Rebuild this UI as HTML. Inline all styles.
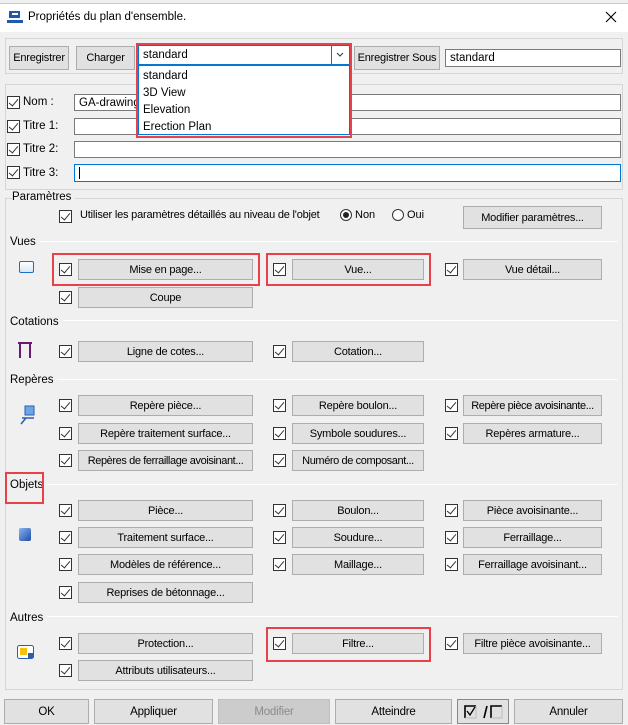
<!DOCTYPE html>
<html><head><meta charset="utf-8"><style>
*{box-sizing:border-box;margin:0;padding:0}
body{width:628px;height:725px;background:#f0f0f0;font-family:"Liberation Sans",sans-serif;font-size:11px;color:#000;position:relative;overflow:hidden}
.a{position:absolute}
.btn{position:absolute;background:#e1e1e1;border:1px solid #adadad;text-align:center;font-size:11px;display:flex;align-items:center;justify-content:center;white-space:nowrap;overflow:hidden;letter-spacing:-0.2px}
.cb{position:absolute;width:13px;height:13px;border:1px solid #333;background:#fff}
.cb:after{content:"";position:absolute;left:3px;top:0px;width:4px;height:8px;border:solid #333;border-width:0 1.5px 1.5px 0;transform:rotate(40deg)}
.tb{position:absolute;background:#fff;border:1px solid #7a7a7a;padding-left:4px;display:flex;align-items:center;font-size:11.5px}
.red{position:absolute;border:2px solid #e8414a}
.lbl{position:absolute;font-size:11.5px;background:#f0f0f0;padding-right:4px}
.ln{position:absolute;height:1px;background:#d5d5d5;border-bottom:1px solid #fff}
.grp{position:absolute;border:1px solid #d5d5d5}
</style></head><body>
<div class="a" style="left:0;top:0;width:628px;height:4px;background:#f0f0f0;border-bottom:1px solid #ccc"></div>
<div class="a" style="left:0;top:4px;width:628px;height:28px;background:#fff"></div>
<svg class="a" style="left:7px;top:11px" width="16" height="13"><rect x="2" y="0" width="11" height="7" fill="#1e5aa8"/><rect x="5" y="2" width="6" height="2" fill="#fff"/><rect x="0" y="9" width="16" height="3" fill="#1e5aa8"/></svg>
<div class="a" style="left:28px;top:11px;font-size:11.5px">Propriétés du plan d'ensemble.</div>
<svg class="a" style="left:605px;top:11px" width="12" height="12"><path d="M1 1L11 11M11 1L1 11" stroke="#000" stroke-width="1.1"/></svg>

<div class="grp" style="left:5px;top:38px;width:618px;height:36px"></div>
<div class="btn" style="left:9px;top:46px;width:60px;height:24px">Enregistrer</div>
<div class="btn" style="left:76px;top:46px;width:59px;height:24px">Charger</div>
<div class="btn" style="left:354px;top:46px;width:86px;height:24px">Enregistrer Sous</div>
<div class="tb" style="left:445px;top:49px;width:176px;height:18px">standard</div>

<div class="grp" style="left:5px;top:84px;width:618px;height:106px"></div>
<div class="cb" style="left:7px;top:96px"></div><div class="a" style="left:23px;top:96px;font-size:11.5px">Nom :</div>
<div class="tb" style="left:74px;top:94px;width:547px;height:17px">GA-drawing</div>
<div class="cb" style="left:7px;top:120px"></div><div class="a" style="left:23px;top:120px;font-size:11.5px">Titre 1:</div>
<div class="tb" style="left:74px;top:118px;width:547px;height:17px"></div>
<div class="cb" style="left:7px;top:143px"></div><div class="a" style="left:23px;top:143px;font-size:11.5px">Titre 2:</div>
<div class="tb" style="left:74px;top:141px;width:547px;height:17px"></div>
<div class="cb" style="left:7px;top:166px"></div><div class="a" style="left:23px;top:167px;font-size:11.5px">Titre 3:</div>
<div class="tb" style="left:74px;top:164px;width:547px;height:18px;border-color:#0078d7"><span style="display:inline-block;width:1px;height:12px;background:#000"></span></div>

<!-- combo -->
<div class="tb" style="left:138px;top:45px;width:212px;height:20px;border-color:#0078d7">standard</div>
<svg class="a" style="left:331px;top:46px" width="18" height="18"><line x1="0.5" y1="0" x2="0.5" y2="18" stroke="#0078d7"/><path d="M6 7L9 10L12 7" stroke="#333" fill="none"/></svg>
<div class="a" style="left:138px;top:65px;width:212px;height:70px;background:#fff;border:1px solid #0078d7;padding:2px 4px;line-height:17px;font-size:11.5px">standard<br>3D View<br>Elevation<br>Erection Plan</div>
<div class="red" style="left:136px;top:43px;width:216px;height:95px"></div>

<!-- big group -->
<div class="grp" style="left:5px;top:198px;width:618px;height:492px"></div>
<div class="lbl" style="left:12px;top:191px">Paramètres</div>
<div class="cb" style="left:59px;top:210px"></div>
<div class="a" style="left:80px;top:209px;letter-spacing:-0.2px">Utiliser les paramètres détaillés au niveau de l'objet</div>
<div class="a" style="left:340px;top:209px;width:12px;height:12px;border:1px solid #333;border-radius:50%;background:#fff"><div class="a" style="left:2px;top:2px;width:6px;height:6px;border-radius:50%;background:#222"></div></div>
<div class="a" style="left:355px;top:209px">Non</div>
<div class="a" style="left:392px;top:209px;width:12px;height:12px;border:1px solid #333;border-radius:50%;background:#fff"></div>
<div class="a" style="left:407px;top:209px">Oui</div>
<div class="btn" style="left:463px;top:206px;width:139px;height:23px">Modifier paramètres...</div>

<div class="ln" style="left:35px;top:241px;width:583px"></div><div class="lbl" style="left:10px;top:236px">Vues</div>
<div class="a" style="left:19px;top:261px;width:15px;height:12px;border:1.5px solid #1e6ec8;border-radius:2px;background:linear-gradient(#fff,#d8e6f5)"></div>
<div class="ln" style="left:55px;top:320px;width:563px"></div><div class="lbl" style="left:10px;top:316px">Cotations</div>
<svg class="a" style="left:17px;top:341px" width="16" height="17"><path d="M1 2H15M3 2V17M13 2V17" stroke="#6b1a6e" stroke-width="2" fill="none"/></svg>
<div class="ln" style="left:47px;top:379px;width:571px"></div><div class="lbl" style="left:10px;top:374px">Repères</div>
<svg class="a" style="left:20px;top:405px" width="18" height="20"><rect x="5" y="1" width="9" height="9" fill="#6fa5e8" stroke="#2a5db0"/><path d="M2 13H14M6 13L1 19" stroke="#2a5db0" stroke-width="1.5" fill="none"/></svg>
<div class="ln" style="left:42px;top:484px;width:576px"></div><div class="lbl" style="left:10px;top:479px">Objets</div>
<div class="red" style="left:5px;top:472px;width:39px;height:32px"></div>
<div class="a" style="left:19px;top:528px;width:12px;height:13px;border-radius:2px;background:linear-gradient(135deg,#8ab4f0,#1d4fa8)"></div>
<div class="ln" style="left:41px;top:616px;width:577px"></div><div class="lbl" style="left:10px;top:612px">Autres</div>
<svg class="a" style="left:17px;top:645px" width="17" height="14"><rect x="0.5" y="0.5" width="16" height="13" rx="2" fill="#fff" stroke="#2a5db0"/><rect x="3" y="3" width="7" height="7" fill="#f4c20d"/><rect x="11" y="8" width="5" height="5" fill="#2a5db0"/></svg>

<!-- rows -->
<div class="cb" style="left:59px;top:263px"></div><div class="btn" style="left:78px;top:259px;width:175px;height:21px">Mise en page...</div>
<div class="cb" style="left:273px;top:263px"></div><div class="btn" style="left:292px;top:259px;width:132px;height:21px">Vue...</div>
<div class="cb" style="left:445px;top:263px"></div><div class="btn" style="left:463px;top:259px;width:139px;height:21px">Vue détail...</div>
<div class="red" style="left:52px;top:253px;width:208px;height:33px"></div>
<div class="red" style="left:266px;top:253px;width:165px;height:33px"></div>
<div class="cb" style="left:59px;top:291px"></div><div class="btn" style="left:78px;top:287px;width:175px;height:21px">Coupe</div>

<div class="cb" style="left:59px;top:345px"></div><div class="btn" style="left:78px;top:341px;width:175px;height:21px">Ligne de cotes...</div>
<div class="cb" style="left:273px;top:345px"></div><div class="btn" style="left:292px;top:341px;width:132px;height:21px">Cotation...</div>

<div class="cb" style="left:59px;top:399px"></div><div class="btn" style="left:78px;top:395px;width:175px;height:21px">Repère pièce...</div>
<div class="cb" style="left:273px;top:399px"></div><div class="btn" style="left:292px;top:395px;width:132px;height:21px">Repère boulon...</div>
<div class="cb" style="left:445px;top:399px"></div><div class="btn" style="left:463px;top:395px;width:139px;height:21px;letter-spacing:-0.4px">Repère pièce avoisinante...</div>
<div class="cb" style="left:59px;top:427px"></div><div class="btn" style="left:78px;top:423px;width:175px;height:21px">Repère traitement surface...</div>
<div class="cb" style="left:273px;top:427px"></div><div class="btn" style="left:292px;top:423px;width:132px;height:21px">Symbole soudures...</div>
<div class="cb" style="left:445px;top:427px"></div><div class="btn" style="left:463px;top:423px;width:139px;height:21px">Repères armature...</div>
<div class="cb" style="left:59px;top:454px"></div><div class="btn" style="left:78px;top:450px;width:175px;height:21px;letter-spacing:-0.4px">Repères de ferraillage avoisinant...</div>
<div class="cb" style="left:273px;top:454px"></div><div class="btn" style="left:292px;top:450px;width:132px;height:21px;letter-spacing:-0.4px">Numéro de composant...</div>

<div class="cb" style="left:59px;top:504px"></div><div class="btn" style="left:78px;top:500px;width:175px;height:21px">Pièce...</div>
<div class="cb" style="left:273px;top:504px"></div><div class="btn" style="left:292px;top:500px;width:132px;height:21px">Boulon...</div>
<div class="cb" style="left:445px;top:504px"></div><div class="btn" style="left:463px;top:500px;width:139px;height:21px">Pièce avoisinante...</div>
<div class="cb" style="left:59px;top:531px"></div><div class="btn" style="left:78px;top:527px;width:175px;height:21px">Traitement surface...</div>
<div class="cb" style="left:273px;top:531px"></div><div class="btn" style="left:292px;top:527px;width:132px;height:21px">Soudure...</div>
<div class="cb" style="left:445px;top:531px"></div><div class="btn" style="left:463px;top:527px;width:139px;height:21px">Ferraillage...</div>
<div class="cb" style="left:59px;top:558px"></div><div class="btn" style="left:78px;top:554px;width:175px;height:21px">Modèles de référence...</div>
<div class="cb" style="left:273px;top:558px"></div><div class="btn" style="left:292px;top:554px;width:132px;height:21px">Maillage...</div>
<div class="cb" style="left:445px;top:558px"></div><div class="btn" style="left:463px;top:554px;width:139px;height:21px">Ferraillage avoisinant...</div>
<div class="cb" style="left:59px;top:586px"></div><div class="btn" style="left:78px;top:582px;width:175px;height:21px">Reprises de bétonnage...</div>

<div class="cb" style="left:59px;top:637px"></div><div class="btn" style="left:78px;top:633px;width:175px;height:21px">Protection...</div>
<div class="cb" style="left:273px;top:637px"></div><div class="btn" style="left:292px;top:633px;width:132px;height:21px">Filtre...</div>
<div class="cb" style="left:445px;top:637px"></div><div class="btn" style="left:463px;top:633px;width:139px;height:21px">Filtre pièce avoisinante...</div>
<div class="red" style="left:266px;top:627px;width:165px;height:35px"></div>
<div class="cb" style="left:59px;top:664px"></div><div class="btn" style="left:78px;top:660px;width:175px;height:21px">Attributs utilisateurs...</div>

<!-- bottom -->
<div class="btn" style="left:4px;top:699px;width:85px;height:25px;font-size:11.5px">OK</div>
<div class="btn" style="left:94px;top:699px;width:119px;height:25px;font-size:11.5px">Appliquer</div>
<div class="btn" style="left:218px;top:699px;width:112px;height:25px;color:#8a8a8a;background:#ccc;border-color:#bfbfbf;font-size:11.5px">Modifier</div>
<div class="btn" style="left:335px;top:699px;width:117px;height:25px;font-size:11.5px">Atteindre</div>
<div class="btn" style="left:457px;top:699px;width:52px;height:25px;border-color:#888">
<svg width="40" height="16"><path d="M2 14V2H13" stroke="#000" stroke-width="1.6" fill="none"/><path d="M13 2V14H2" stroke="#bbb" fill="none"/><path d="M4 7L7 11L12 3" stroke="#000" stroke-width="1.3" fill="none"/><path d="M21 14L24 2" stroke="#000" stroke-width="1.6"/><path d="M28 14V2H39" stroke="#000" stroke-width="1.6" fill="none"/><path d="M39 2V14H28" stroke="#bbb" fill="none"/></svg></div>
<div class="btn" style="left:514px;top:699px;width:109px;height:25px;font-size:11.5px">Annuler</div>
</body></html>
